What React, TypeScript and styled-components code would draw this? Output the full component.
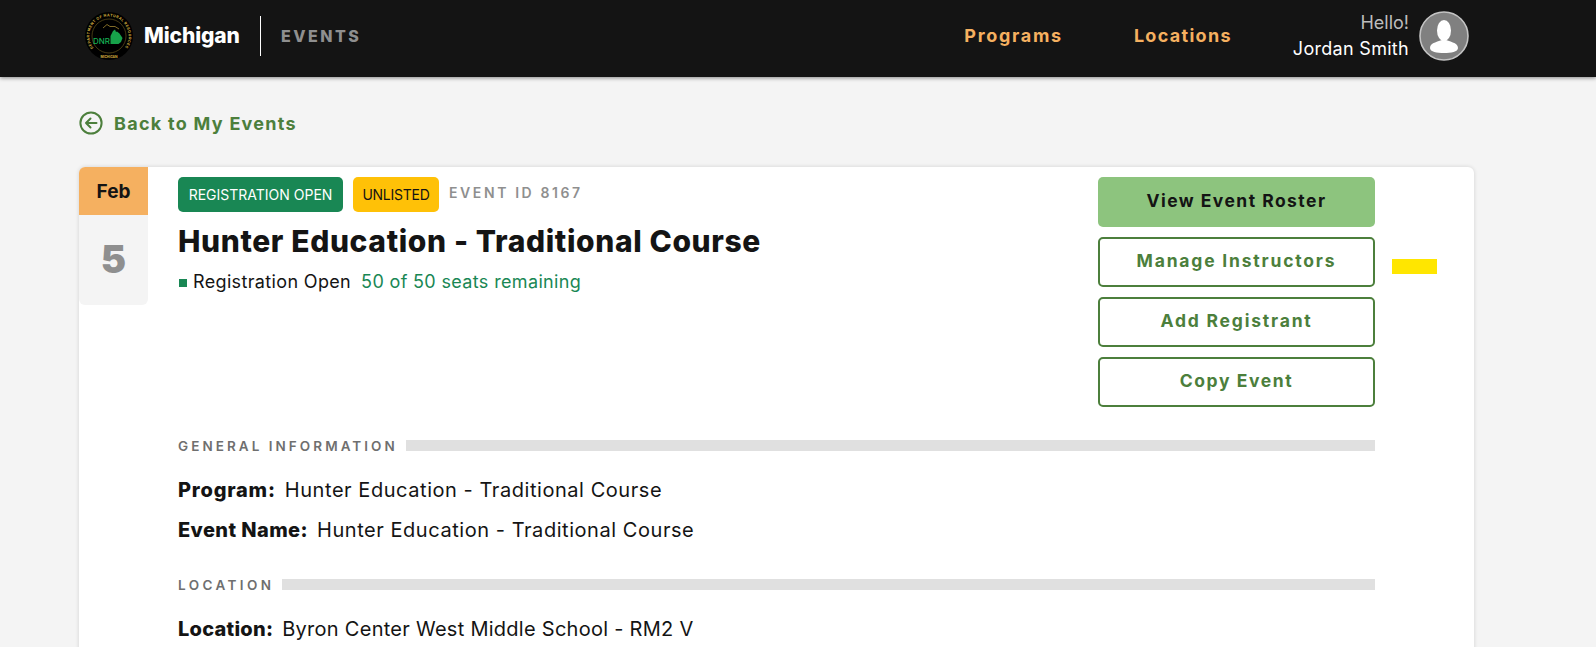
import React from "react";
import styled, { createGlobalStyle } from "styled-components";

const Global = createGlobalStyle`
  html, body { margin: 0; padding: 0; height: 100%; overflow: hidden; background: #f4f4f4; }
  * { box-sizing: border-box; }
  body { font-family: Inter, "Open Sans", "Liberation Sans", sans-serif; color: #141414; }
`;

const Page = styled.div`height: 647px; overflow: hidden; background: #f4f4f4;`;

const Header = styled.header`
  height: 77px; background: #141414; box-shadow: 0 1px 4px rgba(0,0,0,.45);
  display: flex; align-items: center; padding: 0 127px 6px 85px; position: relative;
`;
const Brand = styled.div`display: flex; align-items: center;`;
const BrandName = styled.span`
  margin-left: 11px; color: #fff; font-weight: 800; font-size: 21px; letter-spacing: -.1px;
`;
const Divider = styled.span`width: 1px; height: 40px; background: #fff; margin: 0 20px 0 20px;`;
const BrandSub = styled.span`color: #8f8f8f; font-weight: 800; font-size: 16px; letter-spacing: 2.5px;`;
const Nav = styled.nav`margin-left: auto; display: flex; align-items: center;`;
const NavLink = styled.a<{ $gap: number; $ls: number }>`
  color: #f5b060; font-weight: 700; font-size: 18px; letter-spacing: ${p => p.$ls}px; margin-right: ${p => p.$gap}px;
`;
const User = styled.div`display: flex; align-items: center; gap: 10px;`;
const Greeting = styled.div`text-align: right; line-height: 26px; font-size: 18px;`;
const Hello = styled.div`color: #bdbdbd;`;
const UserName = styled.div`color: #fff; letter-spacing: .3px;`;

const Main = styled.main`padding: 0 122px 0 79px;`;
const Back = styled.a`
  display: flex; align-items: center; gap: 11px; height: 90px; padding-top: 2px;
  color: #4c7f3c; font-weight: 700; font-size: 18px; letter-spacing: 1.27px;
`;
const Card = styled.section`
  background: #fff; border-radius: 6px; box-shadow: 0 0 4px rgba(0,0,0,.14);
  display: grid; grid-template-columns: 69px 1fr; min-height: 700px; position: relative;
`;
const DateCol = styled.div`align-self: start;`;
const Month = styled.div`
  height: 48px; background: #f5b060; border-radius: 6px 0 0 0; display: flex; align-items: center; justify-content: center;
  font-weight: 700; font-size: 19px;
`;
const Day = styled.div`
  height: 90px; background: #f4f4f4; border-radius: 0 0 6px 6px; display: flex; align-items: center; justify-content: center;
  color: #8f8f8f; font-weight: 900; font-size: 38px; padding-bottom: 3px;
`;
const Body = styled.div`padding: 10px 99px 0 30px;`;
const Top = styled.div`display: flex; justify-content: space-between; align-items: flex-start;`;
const Summary = styled.div``;
const Badges = styled.div`display: flex; align-items: center; gap: 10px;`;
const Badge = styled.span<{ $bg: string; $fg: string; $w: number; $ls: number }>`
  width: ${p => p.$w}px; height: 35px; border-radius: 5px; display: flex; align-items: center; justify-content: center;
  background: ${p => p.$bg}; color: ${p => p.$fg}; font-size: 14px; letter-spacing: ${p => p.$ls}px; white-space: nowrap;
`;
const EventId = styled.span`
  color: #8f8f8f; font-weight: 600; font-size: 14px; letter-spacing: 2.6px; margin-bottom: 4px;
`;
const Title = styled.h1`margin: 11px 0 0; font-size: 30px; line-height: 36px; font-weight: 800; letter-spacing: .62px; white-space: nowrap;`;
const Status = styled.div`display: flex; align-items: center; margin-top: 11px; font-size: 18px; line-height: 24px; letter-spacing: .35px;`;
const Square = styled.span`width: 8px; height: 8px; background: #198754; margin: 2px 6px 0 1px;`;
const Seats = styled.span`color: #198754; margin-left: 10px;`;
const Actions = styled.div`width: 277px; display: flex; flex-direction: column; gap: 10px;`;
const Action = styled.button<{ $solid?: boolean; $ls: number }>`
  height: 50px; border-radius: 5px; font: 700 17.5px Inter, sans-serif; letter-spacing: ${p => p.$ls}px; cursor: pointer; padding: 0 0 3px;
  background: ${p => (p.$solid ? "#8dc47e" : "#fff")};
  color: ${p => (p.$solid ? "#141414" : "#4c7f3c")};
  border: ${p => (p.$solid ? "none" : "2px solid #4c7f3c")};
`;
const Marker = styled.span`position: absolute; left: 1313px; top: 92px; width: 45px; height: 15px; background: #ffe600;`;
const SectionHead = styled.div<{ $mt: number }>`display: flex; align-items: center; gap: 8px; margin-top: ${p => p.$mt}px; height: 12px;`;
const SectionLabel = styled.span<{ $ls: number }>`
  color: #6f6f6f; font-weight: 600; font-size: 13.5px; letter-spacing: ${p => p.$ls}px; white-space: nowrap; padding-top: 2px;
`;
const Rule = styled.span`flex: 1; height: 11px; background: #e0e0e0;`;
const Row = styled.p<{ $mt: number; $ls: number }>`margin: ${p => p.$mt}px 0 0; font-size: 20px; line-height: 28px; white-space: nowrap; letter-spacing: ${p => p.$ls}px;`;
const Label = styled.b<{ $ls: number }>`font-weight: 800; margin-right: 9px; letter-spacing: ${p => p.$ls}px;`;

const Seal = () => (
  <svg width="48" height="48" viewBox="0 0 48 48" aria-hidden="true">
    <defs>
      <path id="ring" d="M8.5 36 A19.6 19.6 0 1 1 39.5 36" />
    </defs>
    <circle cx="24" cy="24" r="24" fill="#000" />
    <circle cx="24" cy="24" r="17" fill="none" stroke="#8a7428" strokeWidth=".5" />
    <text fontSize="3.7" fill="#d0ad3e" fontWeight="700" fontFamily="Inter, sans-serif" textLength="86" lengthAdjust="spacing">
      <textPath href="#ring">DEPARTMENT OF NATURAL RESOURCES</textPath>
    </text>
    <text x="24" y="45.5" textAnchor="middle" fontSize="3.3" fill="#d0ad3e" fontWeight="700" fontFamily="Inter, sans-serif">MICHIGAN</text>
    <path d="M18 16 L22 12.5 L25 14.5 L30 14.5 L34 17" fill="none" stroke="#b89a38" strokeWidth=".7" />
    <path d="M25.5 32 L25.5 24 L28 19 L30 17.5 L31 20 L32 19.5 L34.5 21.5 L37.5 26 L36 30 L33.5 32 Z" fill="#17a24a" />
    <text x="8" y="32" fontSize="8.2" fill="#14b254" fontFamily="Inter, sans-serif" fontWeight="500" textLength="17" lengthAdjust="spacingAndGlyphs">DNR</text>
  </svg>
);

const Avatar = () => (
  <svg width="50" height="50" viewBox="0 0 50 50" aria-hidden="true">
    <circle cx="25" cy="25" r="24" fill="#808080" stroke="#c4c4c4" strokeWidth="1.6" />
    <ellipse cx="25" cy="19.5" rx="7" ry="10.5" fill="#fff" />
    <path d="M25 28 C20 31 11 31 11 37 C11 41 18 42 25 42 C32 42 39 41 39 37 C39 31 30 31 25 28 Z" fill="#fff" />
  </svg>
);

const BackIcon = () => (
  <svg width="24" height="24" viewBox="0 0 24 24" fill="none" stroke="#4c7f3c" strokeWidth="2" strokeLinecap="round" strokeLinejoin="round" aria-hidden="true">
    <circle cx="12" cy="12" r="10.6" />
    <path d="M17.5 12H7M11.5 7.5 7 12l4.5 4.5" />
  </svg>
);

export default function App() {
  return (
    <Page>
      <Global />
      <Header>
        <Brand>
          <Seal />
          <BrandName>Michigan</BrandName>
          <Divider />
          <BrandSub>EVENTS</BrandSub>
        </Brand>
        <Nav>
          <NavLink $gap={71} $ls={1.7}>Programs</NavLink>
          <NavLink $gap={61} $ls={1.3}>Locations</NavLink>
          <User>
            <Greeting>
              <Hello>Hello!</Hello>
              <UserName>Jordan Smith</UserName>
            </Greeting>
            <Avatar />
          </User>
        </Nav>
      </Header>
      <Main>
        <Back><BackIcon />Back to My Events</Back>
        <Card>
          <DateCol>
            <Month>Feb</Month>
            <Day>5</Day>
          </DateCol>
          <Body>
            <Top>
              <Summary>
                <Badges>
                  <Badge $bg="#198754" $fg="#fff" $w={165} $ls={0}>REGISTRATION OPEN</Badge>
                  <Badge $bg="#ffc107" $fg="#141414" $w={86} $ls={-0.25}>UNLISTED</Badge>
                  <EventId>EVENT ID 8167</EventId>
                </Badges>
                <Title>Hunter Education - Traditional Course</Title>
                <Status>
                  <Square />Registration Open<Seats>50 of 50 seats remaining</Seats>
                </Status>
              </Summary>
              <Actions>
                <Action $solid $ls={1.45}>View Event Roster</Action>
                <Action $ls={1.8}>Manage Instructors</Action>
                <Action $ls={1.8}>Add Registrant</Action>
                <Action $ls={1.6}>Copy Event</Action>
              </Actions>
            </Top>
            <SectionHead $mt={32}>
              <SectionLabel $ls={3.05}>GENERAL INFORMATION</SectionLabel>
              <Rule />
            </SectionHead>
            <Row $mt={25} $ls={.55}><Label $ls={.8}>Program:</Label>Hunter Education - Traditional Course</Row>
            <Row $mt={12} $ls={.55}><Label $ls={.4}>Event Name:</Label>Hunter Education - Traditional Course</Row>
            <SectionHead $mt={34}>
              <SectionLabel $ls={3.4}>LOCATION</SectionLabel>
              <Rule />
            </SectionHead>
            <Row $mt={25} $ls={.27}><Label $ls={.25}>Location:</Label>Byron Center West Middle School - RM2 V</Row>
          </Body>
          <Marker />
        </Card>
      </Main>
    </Page>
  );
}
